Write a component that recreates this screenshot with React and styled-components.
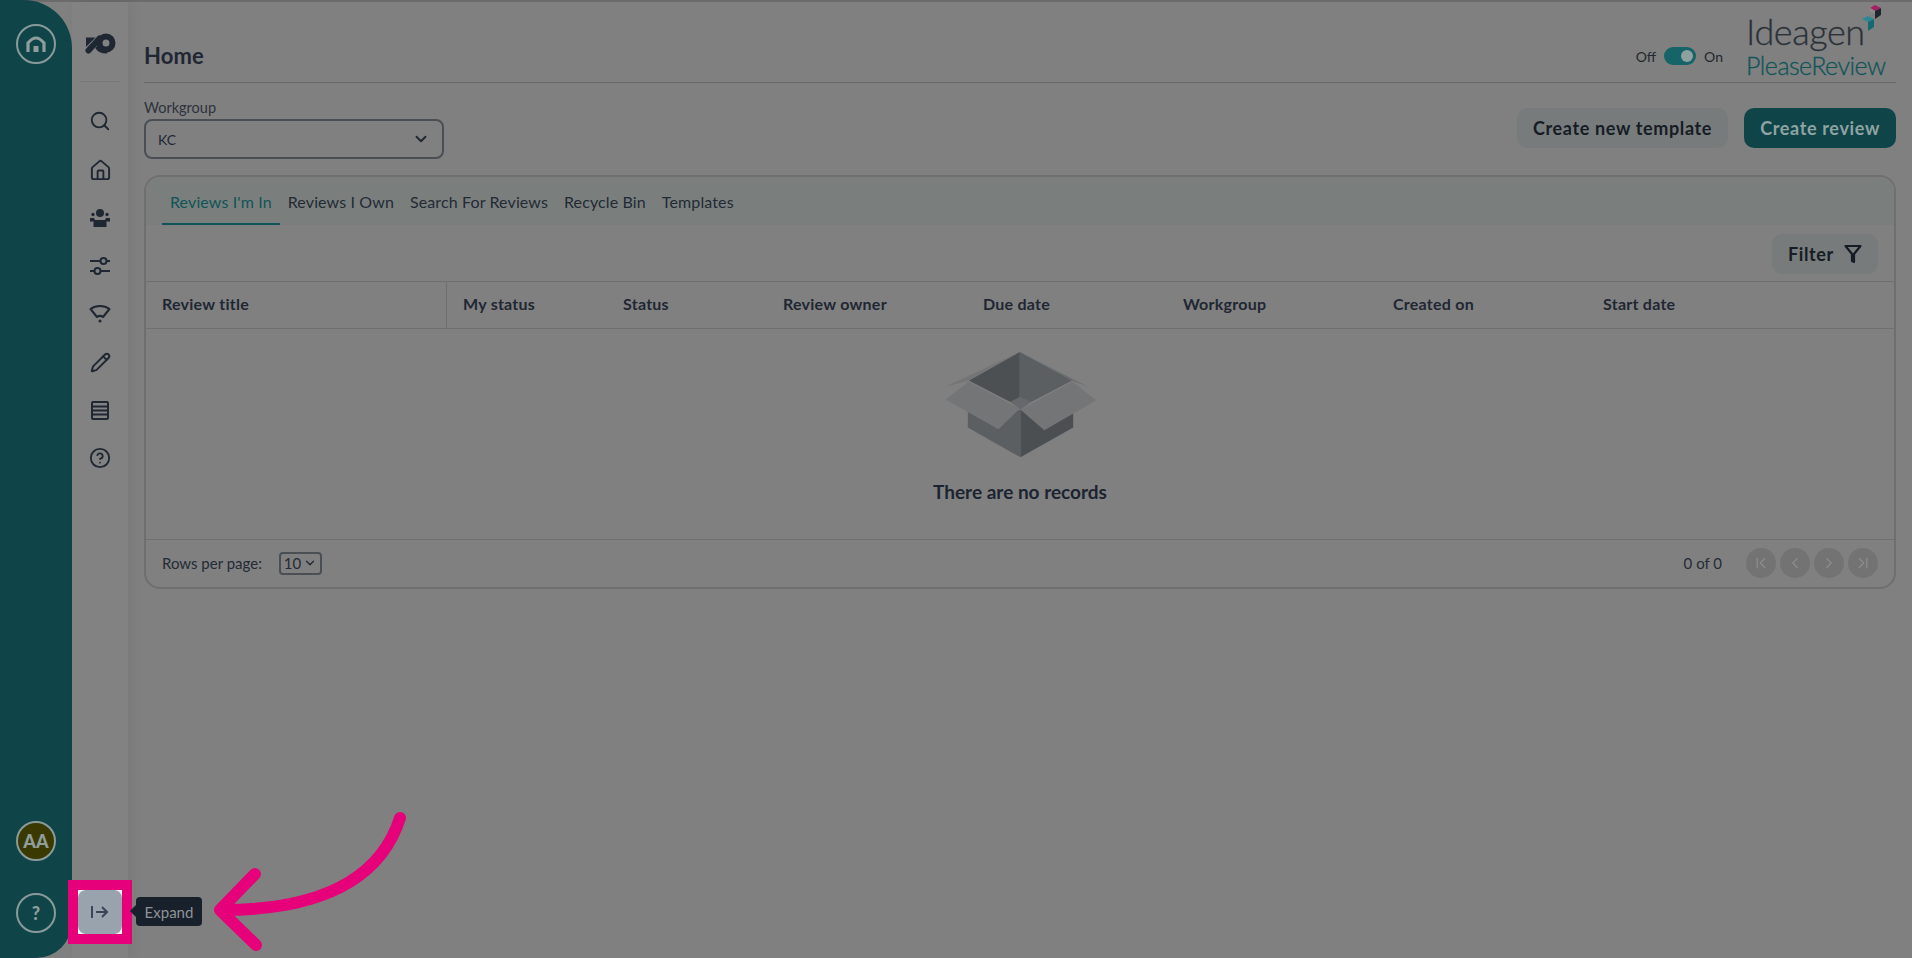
import React from "react";
import styled, { createGlobalStyle } from "styled-components";
import { ChevronDown, ChevronLeft, ChevronRight, ChevronFirst, ChevronLast, Search, House, Pencil, CircleHelp } from "lucide-react";

const GlobalStyle = createGlobalStyle`
  html, body { margin: 0; padding: 0; height: 100%; overflow: hidden; background: #808080; }
  body { font-family: "Lato", "Liberation Sans", sans-serif; color: #1c2430; }
  * { box-sizing: border-box; }
`;

const Page = styled.div`
  position: relative;
  display: flex;
  width: 1912px;
  height: 958px;
  background: #808080;
  border-top: 2px solid #6b6b6b;
`;

const Rail = styled.aside`
  width: 72px;
  margin-top: -2px;
  height: 958px;
  background: #0f4549;
  border-radius: 0 48px 36px 0;
  display: flex;
  flex-direction: column;
  align-items: center;
  justify-content: space-between;
  padding: 24px 0 25px;
`;

const RailGroup = styled.div`
  display: flex;
  flex-direction: column;
  align-items: center;
  gap: 32px;
`;

const RailCircle = styled.div`
  width: 40px;
  height: 40px;
  border-radius: 50%;
  border: 2px solid #8a9a9a;
  background: ${(p) => p.$fill || "transparent"};
  color: #8f9d9d;
  display: flex;
  align-items: center;
  justify-content: center;
  font-weight: 900;
  font-size: 18px;
`;

const SideNav = styled.nav`
  width: 56px;
  flex: none;
  background: #828282;
  box-shadow: 4px 0 10px rgba(0, 0, 0, 0.05);
  display: flex;
  flex-direction: column;
  align-items: center;
  padding-top: 30px;
`;

const NavDivider = styled.div`
  width: 40px;
  height: 1px;
  background: #777;
  margin: 25px 0 14px;
`;

const NavIcon = styled.div`
  width: 24px;
  height: ${(p) => (p.$tall ? "50px" : "48px")};
  display: flex;
  align-items: center;
  justify-content: center;
  color: #1f2733;
`;

const ExpandButton = styled.button`
  position: absolute;
  left: 78px;
  top: 888px;
  width: 44px;
  height: 44px;
  border: 0;
  border-radius: 8px;
  padding: 0 2px 0 0;
  background: #99a3ad;
  color: #3a4658;
  display: flex;
  align-items: center;
  justify-content: center;
`;

const Highlight = styled.div`
  position: absolute;
  left: 68px;
  top: 878px;
  width: 64px;
  height: 64px;
  border: 10px solid #e6007a;
  background: #fff;
`;

const Tooltip = styled.div`
  position: absolute;
  left: 136px;
  top: 895px;
  width: 66px;
  height: 29px;
  background: #18212b;
  border-radius: 4px;
  color: #8f9296;
  font-size: 15px;
  display: flex;
  align-items: center;
  justify-content: center;
  &::before {
    content: "";
    position: absolute;
    left: -4px;
    top: 9px;
    width: 10px;
    height: 10px;
    background: #18212b;
    transform: rotate(45deg);
  }
`;

const ArrowLayer = styled.svg`
  position: absolute;
  left: 0;
  top: -2px;
  pointer-events: none;
`;

const Main = styled.main`
  flex: 1;
  min-width: 0;
  padding: 0 16px;
  display: flex;
  flex-direction: column;
`;

const TopBar = styled.header`
  height: 81px;
  border-bottom: 1px solid #666;
  display: flex;
  align-items: flex-start;
  justify-content: space-between;
`;

const Title = styled.h1`
  margin: 41px 0 0;
  font-size: 22px;
  line-height: 26px;
  font-weight: 700;
  letter-spacing: 0.1px;
  color: #1f2733;
`;

const TopRight = styled.div`
  display: flex;
  align-items: flex-start;
`;

const ToggleWrap = styled.div`
  display: flex;
  align-items: center;
  gap: 8px;
  font-size: 14px;
  color: #22282f;
  margin: 45px 23px 0 0;
`;

const ToggleTrack = styled.div`
  width: 32px;
  height: 18px;
  border-radius: 9px;
  background: #156568;
  display: flex;
  align-items: center;
  justify-content: flex-end;
  padding-right: 3px;
  &::after {
    content: "";
    width: 12px;
    height: 12px;
    border-radius: 50%;
    background: #8fa0a0;
  }
`;

const Brand = styled.div`
  position: relative;
  width: 150px;
  padding-top: 9px;
`;

const BrandTop = styled.div`
  font-size: 36px;
  font-weight: 300;
  line-height: 41px;
  letter-spacing: -0.4px;
  color: #2a3138;
  -webkit-text-stroke: 0.3px #2a3138;
`;

const BrandBottom = styled.div`
  font-size: 25px;
  font-weight: 300;
  line-height: 26px;
  letter-spacing: -0.5px;
  color: #0f5558;
  -webkit-text-stroke: 0.3px #0f5558;
`;

const BrandMark = styled.svg`
  position: absolute;
  left: 115px;
  top: 3px;
`;

const ControlRow = styled.div`
  display: flex;
  align-items: flex-end;
  justify-content: space-between;
  margin-top: 16px;
`;

const FieldLabel = styled.div`
  font-size: 14.5px;
  line-height: 18px;
  color: #2c333c;
  margin-bottom: 2px;
`;

const SelectBox = styled.div`
  width: 300px;
  height: 40px;
  border: 2px solid #4a4f56;
  border-radius: 8px;
  padding: 0 12px;
  font-size: 14px;
  display: flex;
  align-items: center;
  justify-content: space-between;
  color: #1f2733;
`;

const Actions = styled.div`
  display: flex;
  gap: 16px;
  margin-bottom: 11px;
`;

const Button = styled.button`
  height: 40px;
  padding: 0 16px;
  border: 0;
  border-radius: 10px;
  font-family: inherit;
  font-size: 18px;
  font-weight: 700;
  letter-spacing: 0.65px;
  background: ${(p) => (p.$primary ? "#0f4549" : "#777b7b")};
  color: ${(p) => (p.$primary ? "#8fa3a3" : "#161c25")};
  display: flex;
  align-items: center;
  gap: 10px;
`;

const Card = styled.section`
  margin-top: 16px;
  height: 414px;
  border: 2px solid #6f6f6f;
  border-radius: 16px;
  overflow: hidden;
  display: flex;
  flex-direction: column;
`;

const TabStrip = styled.div`
  height: 48px;
  flex: none;
  background: #7a7f7d;
  padding: 0 16px;
  display: flex;
  align-items: flex-end;
`;

const Tab = styled.div`
  height: 48px;
  padding: 3px 8px 0;
  display: flex;
  align-items: center;
  font-size: 16px;
  letter-spacing: 0.12px;
  color: ${(p) => (p.$active ? "#0f5558" : "#232a35")};
  border-bottom: 2px solid ${(p) => (p.$active ? "#0f5558" : "transparent")};
`;

const FilterRow = styled.div`
  height: 57px;
  flex: none;
  padding: 9px 16px 0 0;
  display: flex;
  justify-content: flex-end;
  border-bottom: 1px solid #6f6f6f;
`;

const HeaderRow = styled.div`
  height: 47px;
  flex: none;
  display: grid;
  grid-template-columns: 301px 160px 160px 200px 200px 210px 210px 1fr;
  align-items: center;
  border-bottom: 1px solid #6f6f6f;
`;

const HeaderCell = styled.div`
  height: 100%;
  display: flex;
  align-items: center;
  padding: 0 0 3px 16px;
  font-size: 16px;
  font-weight: 700;
  letter-spacing: 0.25px;
  color: #1f2733;
  border-right: ${(p) => (p.$first ? "1px solid #6f6f6f" : "0")};
`;

const Empty = styled.div`
  height: 211px;
  flex: none;
  display: flex;
  flex-direction: column;
  align-items: center;
  padding-top: 22px;
  font-size: 19px;
  font-weight: 700;
  color: #1c2430;
  border-bottom: 1px solid #6f6f6f;
`;

const BoxArt = styled.svg`
  margin-bottom: 21px;
`;

const Footer = styled.div`
  flex: 1;
  display: flex;
  align-items: center;
  justify-content: space-between;
  padding: 0 16px 1px;
  font-size: 15px;
  color: #242b35;
`;

const RowsPer = styled.div`
  display: flex;
  align-items: center;
  gap: 17px;
`;

const SmallSelect = styled.div`
  width: 43px;
  height: 23px;
  border: 2px solid #4a4f56;
  border-radius: 4px;
  display: flex;
  align-items: center;
  justify-content: center;
  gap: 2px;
`;

const Pager = styled.div`
  display: flex;
  align-items: center;
`;

const PageCount = styled.span`
  margin-right: 20px;
`;

const PageButton = styled.div`
  width: 30px;
  height: 30px;
  margin-left: 4px;
  border-radius: 50%;
  background: #737373;
  color: #8a8a8a;
  display: flex;
  align-items: center;
  justify-content: center;
`;

const columns = ["My status", "Status", "Review owner", "Due date", "Workgroup", "Created on", "Start date"];
const tabs = ["Reviews I'm In", "Reviews I Own", "Search For Reviews", "Recycle Bin", "Templates"];

const RailHome = () => (
  <svg width="24" height="24" viewBox="0 0 24 24" fill="none" stroke="#8f9d9d" strokeWidth="3.200">
    <path d="M4 20V11Q12 1 20 11V20" />
    <rect x="9.500" y="14" width="5" height="6" fill="#8f9d9d" stroke="none" />
  </svg>
);

const LogoMark = () => (
  <svg width="32" height="24" viewBox="0 0 32 24" fill="none">
    <path d="M2 5.500h9.500L2 15z" fill="#1f2733" />
    <path d="M4.500 18.500 15.500 6.500" stroke="#1f2733" strokeWidth="6" strokeLinecap="round" />
    <path d="M13 16c2 3 5 4 9 4" stroke="#1f2733" strokeWidth="3" strokeLinecap="round" />
    <circle cx="22" cy="11" r="6.500" stroke="#1f2733" strokeWidth="6" />
  </svg>
);

const PeopleIcon = () => (
  <svg width="20" height="18" viewBox="0 0 20 18" fill="#1f2733">
    <circle cx="10" cy="4" r="4" />
    <circle cx="3" cy="5.500" r="1.700" />
    <circle cx="17" cy="5.500" r="1.700" />
    <path d="M0 9h4l1 2h10l1-2h4v3.500h-3.500V18h-13v-5.500H0z" />
  </svg>
);

const SlidersIcon = () => (
  <svg width="20" height="20" viewBox="0 0 20 20" fill="none" stroke="#1f2733" strokeWidth="2">
    <path d="M0 5h10.500M16.500 5H20M0 15h4.500M10.500 15H20" />
    <circle cx="13.500" cy="5" r="3" />
    <circle cx="7.500" cy="15" r="3" />
  </svg>
);

const SignalIcon = () => (
  <svg width="22" height="20" viewBox="0 0 22 20" fill="none" stroke="#1f2733" strokeWidth="2">
    <path d="M1.500 5C7 1 15 1 20.500 5l-6.500 8C12 11.500 10 11.500 8 13z" strokeLinejoin="round" />
    <circle cx="11" cy="17" r="1.500" fill="#1f2733" stroke="none" />
  </svg>
);

const RowsIcon = () => (
  <svg width="20" height="20" viewBox="0 0 20 20" fill="none" stroke="#1f2733" strokeWidth="2">
    <rect x="2" y="2" width="16" height="17" rx="1" />
    <path d="M2 6.500h16M2 10.500h16M2 14.500h16" />
  </svg>
);

const FunnelIcon = () => (
  <svg width="18" height="20" viewBox="0 0 18 20" fill="none" stroke="#161c25" strokeWidth="2.200">
    <path d="M1.500 2h15L10 10v8l-2-1V10z" strokeLinejoin="round" />
  </svg>
);

const BoxIllustration = () => (
  <BoxArt width="153" height="108" viewBox="135 66 450 316">
    <polygon points="208,152 358,68 358,205 330,215" fill="#4d5053" />
    <polygon points="358,68 512,152 392,215 358,205" fill="#5c5f62" />
    <polygon points="330,215 358,200 392,215 360,238" fill="#66696b" />
    <polygon points="135,172 358,68 208,152" fill="#737577" />
    <polygon points="358,68 558,170 512,152" fill="#6a6c6e" />
    <polygon points="205,240 360,238 360,378 205,290" fill="#5c5f61" />
    <polygon points="360,238 515,250 515,290 360,378" fill="#4c4f52" />
    <polygon points="140,208 208,155 358,235 295,295" fill="#737577" />
    <polygon points="360,238 512,155 583,210 430,298" fill="#737577" />
  </BoxArt>
);

export default function App() {
  return (
    <>
      <GlobalStyle />
      <Page>
        <Rail>
          <RailCircle>
            <RailHome />
          </RailCircle>
          <RailGroup>
            <RailCircle $fill="#3a3a00">AA</RailCircle>
            <RailCircle>?</RailCircle>
          </RailGroup>
        </Rail>

        <SideNav>
          <LogoMark />
          <NavDivider />
          <NavIcon $tall><Search size={22} strokeWidth={2} /></NavIcon>
          <NavIcon><House size={23} strokeWidth={2} /></NavIcon>
          <NavIcon><PeopleIcon /></NavIcon>
          <NavIcon><SlidersIcon /></NavIcon>
          <NavIcon><SignalIcon /></NavIcon>
          <NavIcon><Pencil size={21} strokeWidth={2.2} /></NavIcon>
          <NavIcon><RowsIcon /></NavIcon>
          <NavIcon><CircleHelp size={22} strokeWidth={2} /></NavIcon>
        </SideNav>

        <Main>
          <TopBar>
            <Title>Home</Title>
            <TopRight>
              <ToggleWrap>
                Off
                <ToggleTrack />
                On
              </ToggleWrap>
              <Brand>
                <BrandTop>Ideagen</BrandTop>
                <BrandBottom>PleaseReview</BrandBottom>
                <BrandMark width="22" height="28" viewBox="0 0 22 28">
                  <polygon points="9,3 14,0 20,3 14,6" fill="#a81e62" />
                  <polygon points="14,6 20,3 20,10 14,14" fill="#20262e" />
                  <polygon points="9,3 14,6 14,9 9,7" fill="#8a8a8a" />
                  <polygon points="1,14 7,11 13,14 7,17" fill="#2a8a94" />
                  <polygon points="7,17 13,14 13,22 7,26" fill="#156a72" />
                </BrandMark>
              </Brand>
            </TopRight>
          </TopBar>

          <ControlRow>
            <div>
              <FieldLabel>Workgroup</FieldLabel>
              <SelectBox>
                KC
                <ChevronDown size={18} strokeWidth={2.5} />
              </SelectBox>
            </div>
            <Actions>
              <Button>Create new template</Button>
              <Button $primary>Create review</Button>
            </Actions>
          </ControlRow>

          <Card>
            <TabStrip>
              {tabs.map((t, i) => (
                <Tab key={t} $active={i === 0}>{t}</Tab>
              ))}
            </TabStrip>
            <FilterRow>
              <Button>
                Filter
                <FunnelIcon />
              </Button>
            </FilterRow>
            <HeaderRow>
              <HeaderCell $first>Review title</HeaderCell>
              {columns.map((c) => (
                <HeaderCell key={c}>{c}</HeaderCell>
              ))}
            </HeaderRow>
            <Empty>
              <BoxIllustration />
              There are no records
            </Empty>
            <Footer>
              <RowsPer>
                Rows per page:
                <SmallSelect>
                  10
                  <ChevronDown size={14} strokeWidth={2.5} />
                </SmallSelect>
              </RowsPer>
              <Pager>
                <PageCount>0 of 0</PageCount>
                <PageButton><ChevronFirst size={18} /></PageButton>
                <PageButton><ChevronLeft size={18} /></PageButton>
                <PageButton><ChevronRight size={18} /></PageButton>
                <PageButton><ChevronLast size={18} /></PageButton>
              </Pager>
            </Footer>
          </Card>
        </Main>

        <Highlight />
        <ExpandButton>
          <svg width="18" height="14" viewBox="0 0 18 14" fill="none" stroke="currentColor" strokeWidth="2">
            <path d="M2 1v12M6 7h11M12 2l5 5-5 5" />
          </svg>
        </ExpandButton>
        <Tooltip>Expand</Tooltip>
        <ArrowLayer width="420" height="958" viewBox="0 0 420 958" fill="none" stroke="#e6007a" strokeWidth="12" strokeLinecap="round" strokeLinejoin="round">
          <path d="M400 818C380 880 320 910 222 910" />
          <path d="M255 874 220 910 256 945" />
        </ArrowLayer>
      </Page>
    </>
  );
}
